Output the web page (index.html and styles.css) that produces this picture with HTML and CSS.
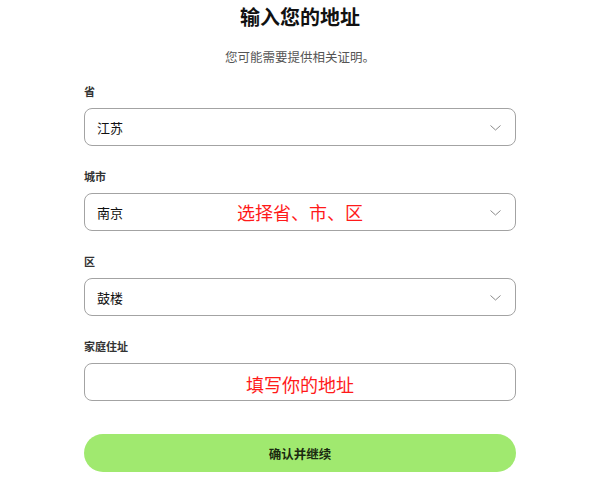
FILE: index.html
```html
<!DOCTYPE html>
<html lang="zh">
<head>
<meta charset="utf-8">
<link rel="stylesheet" href="styles.css">
</head>
<body>
<main class="page">
  <h1 class="title">输入您的地址</h1>
  <p class="subtitle">您可能需要提供相关证明。</p>
  <form class="form">
    <div class="group">
      <label class="label">省</label>
      <div class="field select"><span class="value">江苏</span>
        <svg class="chev" width="11" height="6" viewBox="0 0 11 6"><path d="M0.5 0.5 L5.5 5 L10.5 0.5" fill="none" stroke="#8a8a8a" stroke-width="1"/></svg>
      </div>
    </div>
    <div class="group">
      <label class="label">城市</label>
      <div class="field select"><span class="value">南京</span>
        <span class="note">选择省、市、区</span>
        <svg class="chev" width="11" height="6" viewBox="0 0 11 6"><path d="M0.5 0.5 L5.5 5 L10.5 0.5" fill="none" stroke="#8a8a8a" stroke-width="1"/></svg>
      </div>
    </div>
    <div class="group">
      <label class="label">区</label>
      <div class="field select"><span class="value">鼓楼</span>
        <svg class="chev" width="11" height="6" viewBox="0 0 11 6"><path d="M0.5 0.5 L5.5 5 L10.5 0.5" fill="none" stroke="#8a8a8a" stroke-width="1"/></svg>
      </div>
    </div>
    <div class="group">
      <label class="label">家庭住址</label>
      <div class="field"><span class="note note2">填写你的地址</span></div>
    </div>
    <button type="button" class="btn">确认并继续</button>
  </form>
</main>
</body>
</html>
```
FILE: styles.css
```css
* { box-sizing: border-box; }
html, body { margin: 0; padding: 0; background: #fff; }
body {
  font-family: "Noto Sans CJK SC", "Noto Sans", sans-serif;
  color: #222;
}
.page {
  width: 432px;
  margin: 0 auto;
  display: flex;
  flex-direction: column;
}
.title {
  margin: 3px 0 0;
  font-size: 20px;
  line-height: 28px;
  font-weight: 700;
  text-align: center;
  color: #111;
}
.subtitle {
  margin: 17px 0 0;
  font-size: 12.5px;
  line-height: 18px;
  text-align: center;
  color: #555;
}
.form {
  display: flex;
  flex-direction: column;
  margin-top: 17px;
}
.group {
  display: flex;
  flex-direction: column;
  gap: 9px;
  margin-bottom: 22px;
}
.label {
  font-size: 11px;
  line-height: 16px;
  height: 16px;
  font-weight: 700;
  color: #333;
}
.field {
  position: relative;
  height: 38px;
  border: 1px solid #a3a3a3;
  border-radius: 8px;
  display: flex;
  align-items: center;
  padding: 0 14px 0 12px;
}
.value {
  font-size: 13px;
  color: #111;
  flex: 1;
}
.chev { flex: none; margin-top: 1px; }
.note {
  position: absolute;
  left: 0;
  right: 0;
  top: 50%;
  transform: translateY(-50%);
  text-align: center;
  font-size: 18px;
  line-height: 24px;
  color: #ff1a1a;
  pointer-events: none;
}
.note2 { margin-top: 2px; }
.btn {
  margin-top: 11px;
  height: 38px;
  border: none;
  border-radius: 19px;
  background: #a0e96f;
  font-family: inherit;
  font-size: 12.5px;
  font-weight: 700;
  color: #1a2a10;
}
```
